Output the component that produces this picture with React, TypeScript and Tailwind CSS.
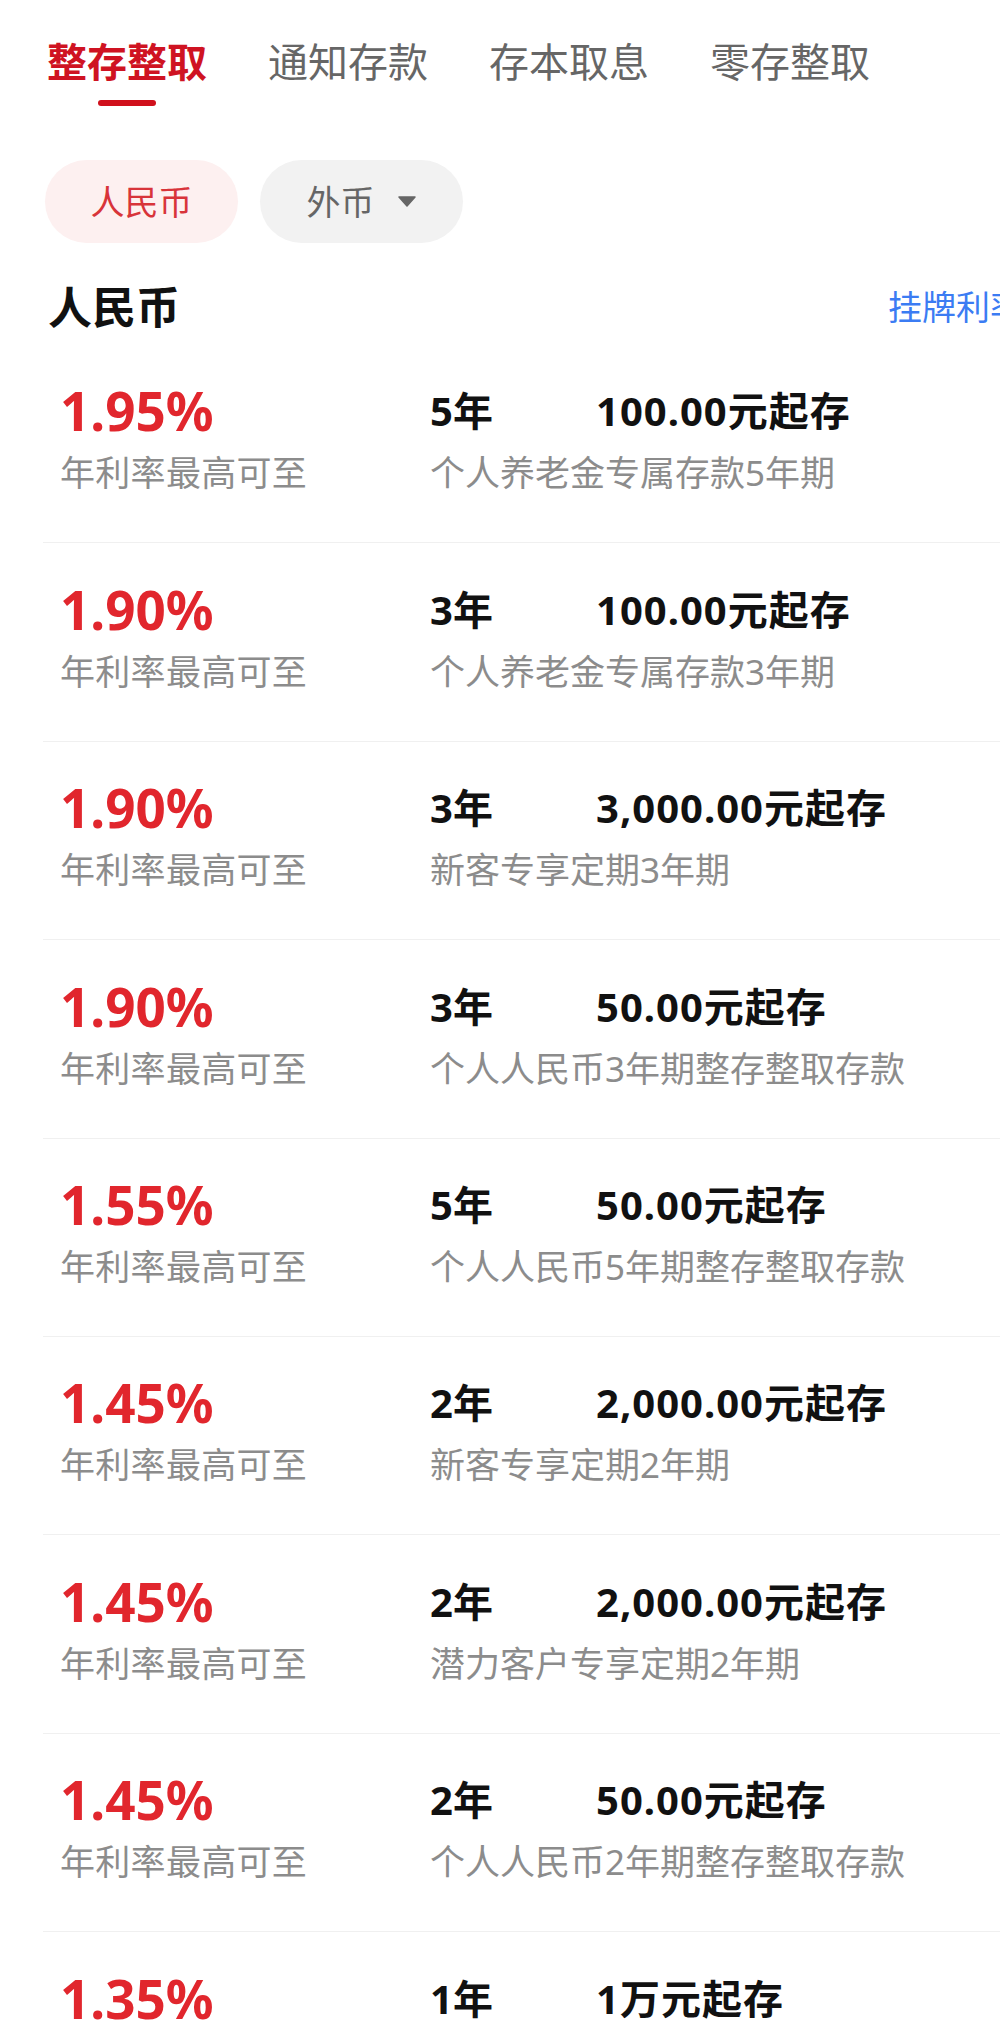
import React from "react";

const rows = [
  { rate: "1.95", term: "5年", min: "100.00元起存", desc: "个人养老金专属存款5年期" },
  { rate: "1.90", term: "3年", min: "100.00元起存", desc: "个人养老金专属存款3年期" },
  { rate: "1.90", term: "3年", min: "3,000.00元起存", desc: "新客专享定期3年期" },
  { rate: "1.90", term: "3年", min: "50.00元起存", desc: "个人人民币3年期整存整取存款" },
  { rate: "1.55", term: "5年", min: "50.00元起存", desc: "个人人民币5年期整存整取存款" },
  { rate: "1.45", term: "2年", min: "2,000.00元起存", desc: "新客专享定期2年期" },
  { rate: "1.45", term: "2年", min: "2,000.00元起存", desc: "潜力客户专享定期2年期" },
  { rate: "1.45", term: "2年", min: "50.00元起存", desc: "个人人民币2年期整存整取存款" },
  { rate: "1.35", term: "1年", min: "1万元起存", desc: "个人人民币1年期整存整取存款" },
];

const tabs = ["整存整取", "通知存款", "存本取息", "零存整取"];

export default function App() {
  return (
    <div
      className="w-[1000px] h-[2024px] overflow-hidden bg-white"
      style={{ fontFamily: '"Noto Sans", "Noto Sans CJK SC", sans-serif' }}
    >
      <div className="w-[1050px]">
        {/* Tabs */}
        <div className="flex pl-[47px] pt-[42px] gap-[61px]">
          {tabs.map((t, i) => (
            <div key={t} className="flex flex-col items-center">
              <span
                className={
                  i === 0
                    ? "text-[40px] leading-[40px] font-bold text-[#cf1322]"
                    : "text-[40px] leading-[40px] text-[#666666]"
                }
              >
                {t}
              </span>
              <div
                className={
                  i === 0
                    ? "mt-[18px] h-[6px] w-[58px] rounded-full bg-[#d0101c]"
                    : "mt-[18px] h-[6px] w-[58px]"
                }
              />
            </div>
          ))}
        </div>

        {/* Currency pills */}
        <div className="flex pl-[45px] mt-[54px] gap-[22px]">
          <div className="h-[83px] w-[193px] rounded-full bg-[#fdf0f0] flex items-center justify-center">
            <span className="text-[34px] leading-none text-[#d8343a]">人民币</span>
          </div>
          <div className="h-[83px] w-[203px] rounded-full bg-[#f2f2f2] flex items-center justify-center gap-[22px]">
            <span className="text-[34px] leading-none text-[#666666]">外币</span>
            <svg width="20" height="11" viewBox="0 0 20 11">
              <path d="M2 1 L18 1 L10 10 Z" fill="#666666" stroke="#666666" strokeWidth="1.5" strokeLinejoin="round" />
            </svg>
          </div>
        </div>

        {/* Heading */}
        <div className="flex items-center justify-between pl-[48px] pr-[26px] mt-[42px]">
          <span className="text-[44px] leading-[44px] font-bold text-[#111111]">人民币</span>
          <span className="text-[34px] leading-[44px] text-[#3b7cf3]">挂牌利率</span>
        </div>

        {/* List */}
        <div className="mt-[16px] ml-[43px]">
          {rows.map((r, i) => (
            <div key={i} className="border-b border-[#f0f0f0] pl-[17px] pt-[38.4px] pb-[49px]">
              <div className="flex items-center h-[56px]">
                <div className="w-[370px] text-[53px] leading-[56px] font-bold text-[#e1262d]">
                  {r.rate}%
                </div>
                <div className="w-[166px] text-[40px] leading-[56px] font-bold text-[#111111]">{r.term}</div>
                <div className="text-[40px] leading-[56px] font-bold tracking-[1px] text-[#111111]">{r.min}</div>
              </div>
              <div className="flex items-center h-[40px] mt-[14px]">
                <div className="w-[370px] text-[35px] leading-[40px] tracking-[0.3px] text-[#8c8c8c]">年利率最高可至</div>
                <div className="text-[35px] leading-[40px] text-[#8c8c8c]">{r.desc}</div>
              </div>
            </div>
          ))}
        </div>
      </div>
    </div>
  );
}
